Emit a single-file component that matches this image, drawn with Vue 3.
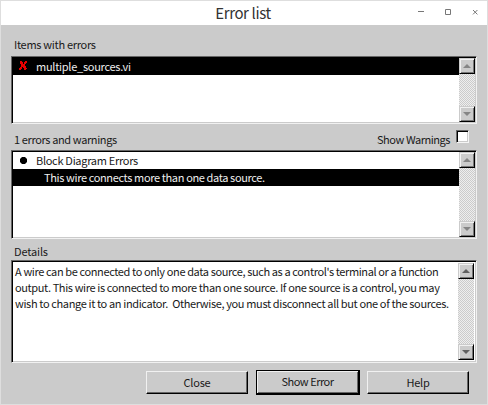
<script setup>
const details = [
  "A wire can be connected to only one data source, such as a control's terminal or a function",
  'output. This wire is connected to more than one source. If one source is a control, you may',
  'wish to change it to an indicator.  Otherwise, you must disconnect all but one of the sources.',
]
</script>

<template>
  <div class="window">
    <header class="titlebar">
      <h1>Error list</h1>
      <div class="controls">
        <svg width="7" height="7" viewBox="0 0 7 7"><path d="M0 2.5h6" /></svg>
        <svg width="7" height="7" viewBox="0 0 7 7"><path d="M.5 .5h5v5h-5z" /></svg>
        <svg width="7" height="7" viewBox="0 0 7 7"><path d="M1 1l4.4 4.4M5.4 1L1 5.4" /></svg>
      </div>
    </header>
    <main>
      <div class="caption first"><span class="t1">Items with errors</span></div>
      <section class="box items">
        <div class="rows">
          <div class="row selected">
            <svg class="mark" width="8" height="9" viewBox="0 0 8 9">
              <path d="M1 0h2v1h1v2h1V1h1V0h2v2H7v1H6v2h1v2h1v1H7v1H5V7H4V6H3v2H2v1H0V7h1V6h1V3H1z" fill="#e60000" />
            </svg>
            <span class="t2">multiple_sources.vi</span>
          </div>
        </div>
        <div class="scroll">
          <i class="arrow"><svg width="8" height="4"><path d="M4 0L8 4H0z" /></svg></i>
          <i class="arrow"><svg width="8" height="4"><path d="M0 0h8L4 4z" /></svg></i>
        </div>
      </section>
      <div class="caption second">
        <span class="t3">1 errors and warnings</span>
        <label><span class="t4">Show Warnings</span><i class="check"></i></label>
      </div>
      <section class="box errors">
        <div class="rows">
          <div class="row">
            <svg class="dot" width="7" height="7"><path d="M2 0h3l2 2v3L5 7H2L0 5V2z" /></svg>
            <span class="t5">Block Diagram Errors</span>
          </div>
          <div class="row selected child"><span class="t6">This wire connects more than one data source.</span></div>
        </div>
        <div class="scroll">
          <i class="arrow"><svg width="8" height="4"><path d="M4 0L8 4H0z" /></svg></i>
          <i class="arrow"><svg width="8" height="4"><path d="M0 0h8L4 4z" /></svg></i>
        </div>
      </section>
      <div class="caption third"><span class="t7">Details</span></div>
      <section class="box details">
        <div class="rows">
          <p v-for="(line, i) in details" :key="i" :class="'line' + i">{{ line }}</p>
        </div>
        <div class="scroll dark">
          <i class="arrow"><svg width="8" height="4"><path d="M4 0L8 4H0z" /></svg></i>
          <i class="arrow"><svg width="8" height="4"><path d="M0 0h8L4 4z" /></svg></i>
        </div>
      </section>
      <footer>
        <button>Close</button>
        <button class="default">Show Error</button>
        <button>Help</button>
      </footer>
    </main>
  </div>
</template>

<style>
body { margin: 0; overflow: hidden; }
</style>
<style scoped>
* { box-sizing: border-box; }
.window {
  width: 488px; height: 405px; border: 1px solid #dedede; background: #cbcbcb;
  font: 11px/16px "Noto Sans CJK SC", sans-serif; color: #1a1a1a; white-space: pre;
}
.titlebar { height: 24px; background: #fff; display: flex; justify-content: flex-end; position: relative; }
h1 { position: absolute; inset: 0; margin: 0; padding-right: 2px; text-align: center; font-size: 15px; letter-spacing: -.38px; font-weight: 400; line-height: 24px; color: #333; }
.controls { display: flex; gap: 20px; padding: 8px 8px 0 0; }
.controls path { fill: none; stroke: #777; stroke-width: 1; }
main { padding: 0 10px; display: flex; flex-direction: column; }
.caption { display: flex; justify-content: space-between; padding: 0 8px 0 3px; }
.first { height: 31px; padding-top: 11px; }
.second { height: 26px; padding-top: 7px; }
.third { height: 21px; padding-top: 4px; }
.t1 { letter-spacing: -.3px; }
.t2 { letter-spacing: -.27px; }
.t3 { letter-spacing: -.38px; }
.t4 { letter-spacing: -.45px; }
.t5 { letter-spacing: -.3px; }
.t6 { letter-spacing: -.37px; }
.t7 { letter-spacing: -.15px; }
label { display: flex; gap: 6px; }
.check {
  width: 13px; height: 13px; margin-top: -1.5px; background: #fff; border: 1px solid; border-color: #666 #f5f5f5 #f5f5f5 #666;
  box-shadow: inset 1px 1px #000, inset -1px -1px #cbcbcb; margin-top: -2px; transform: translateY(1px);
}
.box {
  width: 466px; display: flex; background: #fff; border: 1px solid; border-color: #666 #f1f1f1 #f1f1f1 #666;
  box-shadow: inset 1px 1px #000, inset -1px -1px #cbcbcb; padding: 1px;
}
.items { height: 68px; }
.errors { height: 89px; }
.details { height: 103px; padding: 2px 2px; }
.rows { flex: 1; min-width: 0; }
.row { height: 17px; display: flex; align-items: center; padding-left: 7px; }
.selected { background: #000; color: #eee; }
.row span { line-height: 17px; }
.mark { margin: -2px 9px 0 -1px; }
.dot { margin: 0 9px 0 0; }
.child { padding-left: 31px; }
p { margin: 0 0 0 1px; line-height: 16px; letter-spacing: -.385px; }
.line2 { letter-spacing: -.37px; }
.scroll {
  width: 16px; flex: none; display: flex; flex-direction: column; justify-content: space-between;
  background: repeating-conic-gradient(#cbcbcb 0 25%, #eee 0 50%) 0 0 / 2px 2px;
}
.arrow {
  width: 16px; height: 16px; background: #cbcbcb; display: flex; align-items: center; justify-content: center;
  border: 1px solid; border-color: #cbcbcb #000 #000 #cbcbcb; box-shadow: inset 1px 1px #f1f1f1, inset -1px -1px #777;
}
.arrow path { fill: #858585; }
.dark .arrow path { fill: #606060; }
footer { display: flex; align-items: center; gap: 7px; padding: 7px 0 0 135px; }
button {
  font: inherit; color: inherit; width: 102px; height: 23px; padding: 0 0 2px; border: 1px solid; border-color: #f1f1f1 #000 #000 #f1f1f1;
  background: #cbcbcb; box-shadow: inset -1px -1px #666; margin-right: 1px; letter-spacing: -.2px;
}
.default { width: 104px; height: 25px; border: 1px solid #000; border-width: 1px 2px 2px 1px; box-shadow: inset 1px 1px #f1f1f1, inset -1px -1px #666; margin-right: 0; letter-spacing: -.48px; }
</style>
